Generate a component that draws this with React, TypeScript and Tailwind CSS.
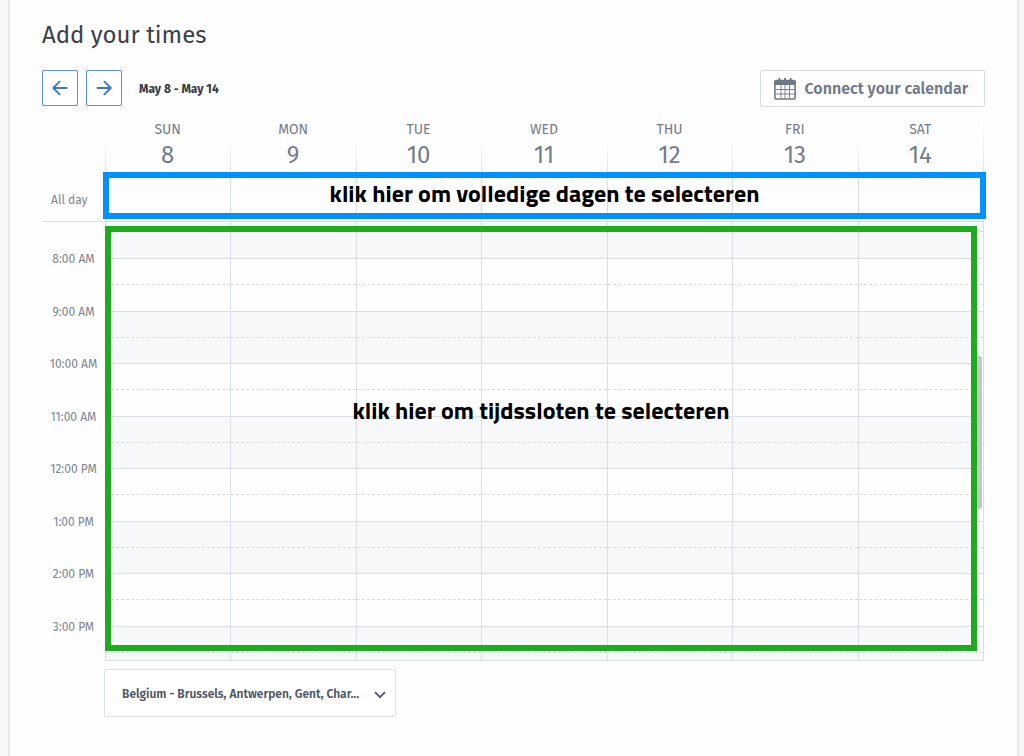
import React from "react";

const days = [
  { name: "SUN", date: 8 },
  { name: "MON", date: 9 },
  { name: "TUE", date: 10 },
  { name: "WED", date: 11 },
  { name: "THU", date: 12 },
  { name: "FRI", date: 13 },
  { name: "SAT", date: 14 },
];

const hours = [
  "8:00 AM",
  "9:00 AM",
  "10:00 AM",
  "11:00 AM",
  "12:00 PM",
  "1:00 PM",
  "2:00 PM",
  "3:00 PM",
];

function ArrowButton({ label, d }: { label: string; d: string }) {
  return (
    <button
      type="button"
      aria-label={label}
      className="flex size-9 items-center justify-center rounded-xs border border-[#5b8def] bg-white text-[#3b74e0]"
    >
      <svg viewBox="0 0 16 16" className="size-4" fill="none" stroke="currentColor" strokeWidth="1.8" strokeLinecap="round" strokeLinejoin="round">
        <path d={d} />
      </svg>
    </button>
  );
}

function CalendarIcon() {
  return (
    <svg viewBox="0 0 22 23" className="h-[23px] w-[22px] shrink-0" fill="none" aria-hidden="true">
      <rect x="0.9" y="3.5" width="20.2" height="18.5" rx="1.8" stroke="#6f7886" strokeWidth="1.6" />
      <path d="M0.1 8V5a2 2 0 0 1 2-2h17.800a2 2 0 0 1 2 2v3z" fill="#6f7886" />
      <path d="M5.400 1.700v2.500M11 1.700v2.500M16.600 1.700v2.500" stroke="#6f7886" strokeWidth="2" strokeLinecap="round" />
      <path d="M7 8v13.500M11 8v13.500M15.500 8v13.500M1.500 12.500h19M1.500 17h19" stroke="#6f7886" strokeWidth="0.9" />
    </svg>
  );
}

function HourRow({ shaded }: { shaded: boolean }) {
  return (
    <div className={shaded ? "grid flex-1 grid-cols-7 bg-[#f7f8fa]" : "grid flex-1 grid-cols-7 bg-[#fefefe]"}>
      {days.map((day) => (
        <div key={day.name} className="flex flex-col border-t border-l border-[#dadfe5]">
          <div className="flex-1 border-b border-dashed border-[#d8dde2]" />
          <div className="flex-1" />
        </div>
      ))}
    </div>
  );
}

export default function App() {
  return (
    <div className="min-h-screen bg-[#f7f8fa] pr-[5px] pl-2 font-['Fira_Sans','Noto_Sans',sans-serif]">
      <main className="min-h-screen border-x-2 border-[#e6e8eb] bg-[#fefefe] px-8 pt-[19px] pb-9">
        <h1 className="text-2xl leading-8 text-[#3a414c]">Add your times</h1>

        <div className="mt-[19px] flex items-start">
          <div className="flex gap-2">
            <ArrowButton label="Previous week" d="M14.600 8H1.600M7.600 1.600 1.200 8l6.400 6.400" />
            <ArrowButton label="Next week" d="M1.400 8h13M8.400 1.600 14.800 8l-6.400 6.400" />
          </div>
          <p className="ml-[17px] pt-px text-xs leading-9 font-bold text-[#343b45]">May 8 - May 14</p>
          <button
            type="button"
            className="ml-auto flex h-[37px] items-center gap-2 rounded-xs border border-[#d5dbe3] bg-white pr-4 pl-[13px] text-base font-semibold text-[#717b89]"
          >
            <CalendarIcon />
            Connect your calendar
          </button>
        </div>

        <section aria-label="Week of May 8" className="mr-px">
          <div className="flex">
            <div className="w-[63px] shrink-0" />
            <div className="grid flex-1 grid-cols-7">
              {days.map((day) => (
                <div key={day.name} className="relative flex h-[67px] flex-col items-center pt-[15px] text-[#747d8b]">
                  <div className="absolute bottom-0 left-0 h-9 w-px bg-linear-to-b from-transparent to-[#dde2e8]" />
                  <span className="text-sm leading-4">{day.name}</span>
                  <span className="mt-[3px] text-2xl leading-7">{day.date}</span>
                </div>
              ))}
            </div>
            <div className="mt-3 w-px bg-linear-to-b from-transparent to-[#dde2e8]" />
          </div>

          <div className="flex border-b border-[#dadfe5]">
            <div className="flex w-[63px] shrink-0 items-center pt-1 pl-[9px] text-xs text-[#7d8593]">All day</div>
            <div className="relative flex-1">
              <div className="grid h-[47px] grid-cols-7 border-r border-[#dadfe5]">
                {days.map((day) => (
                  <div key={day.name} className="border-l border-[#dadfe5]" />
                ))}
              </div>
              <div className="absolute -top-0.5 -right-0.5 -left-0.5 flex h-[47px] items-center justify-center border-6 border-[#0091ff] pb-1.5 font-['Titillium_Web','Fira_Sans','Noto_Sans',sans-serif] text-2xl font-bold text-black">
                klik hier om volledige dagen te selecteren
              </div>
            </div>
          </div>

          <div className="flex h-[439px]">
            <div className="flex w-[63px] shrink-0 flex-col overflow-hidden pt-[37px]">
              <div className="grid h-[420px] shrink-0 grid-rows-8">
                {hours.map((hour) => (
                  <span key={hour} className="-mt-2 text-center text-xs leading-4 text-[#7d8593]">
                    {hour}
                  </span>
                ))}
              </div>
            </div>
            <div className="relative flex-1">
              <div className="flex h-[439px] flex-col overflow-hidden border-r border-b border-[#dadfe5]">
                <div className="grid h-9 shrink-0 grid-cols-7 bg-[#f7f8fa]">
                  {days.map((day) => (
                    <div key={day.name} className="border-l border-[#dadfe5]">
                      <div className="h-[10px] border-b border-dashed border-[#d8dde2]" />
                    </div>
                  ))}
                </div>
                <div className="flex h-[420px] shrink-0 flex-col">
                  {hours.map((hour, index) => (
                    <HourRow key={hour} shaded={index % 2 === 1} />
                  ))}
                </div>
              </div>
              <div className="absolute top-[134px] right-0.5 h-[153px] w-2 rounded-[3px] bg-[#c5c6c8]" />
              <div className="absolute top-1 right-[7px] bottom-[10px] left-0 flex justify-center border-6 border-[#1eab1e] pt-[162px] font-['Titillium_Web','Fira_Sans','Noto_Sans',sans-serif] text-2xl leading-8 font-bold text-black">
                klik hier om tijdssloten te selecteren
              </div>
            </div>
          </div>
        </section>

        <div className="relative mt-2 ml-[62px] w-[292px]">
          <select
            aria-label="Region"
            className="h-12 w-full appearance-none rounded-xs border border-[#dde2e8] bg-white pt-0.5 pr-7 pl-[17px] text-xs font-semibold text-[#505866]"
          >
            <option>Belgium - Brussels, Antwerpen, Gent, Char...</option>
          </select>
          <svg viewBox="0 0 12 8" className="pointer-events-none absolute top-[22px] right-[10px] h-2 w-3" fill="none" stroke="#505866" strokeWidth="1.8">
            <path d="M1 1.200 6 6.200 11 1.200" />
          </svg>
        </div>
      </main>
    </div>
  );
}
